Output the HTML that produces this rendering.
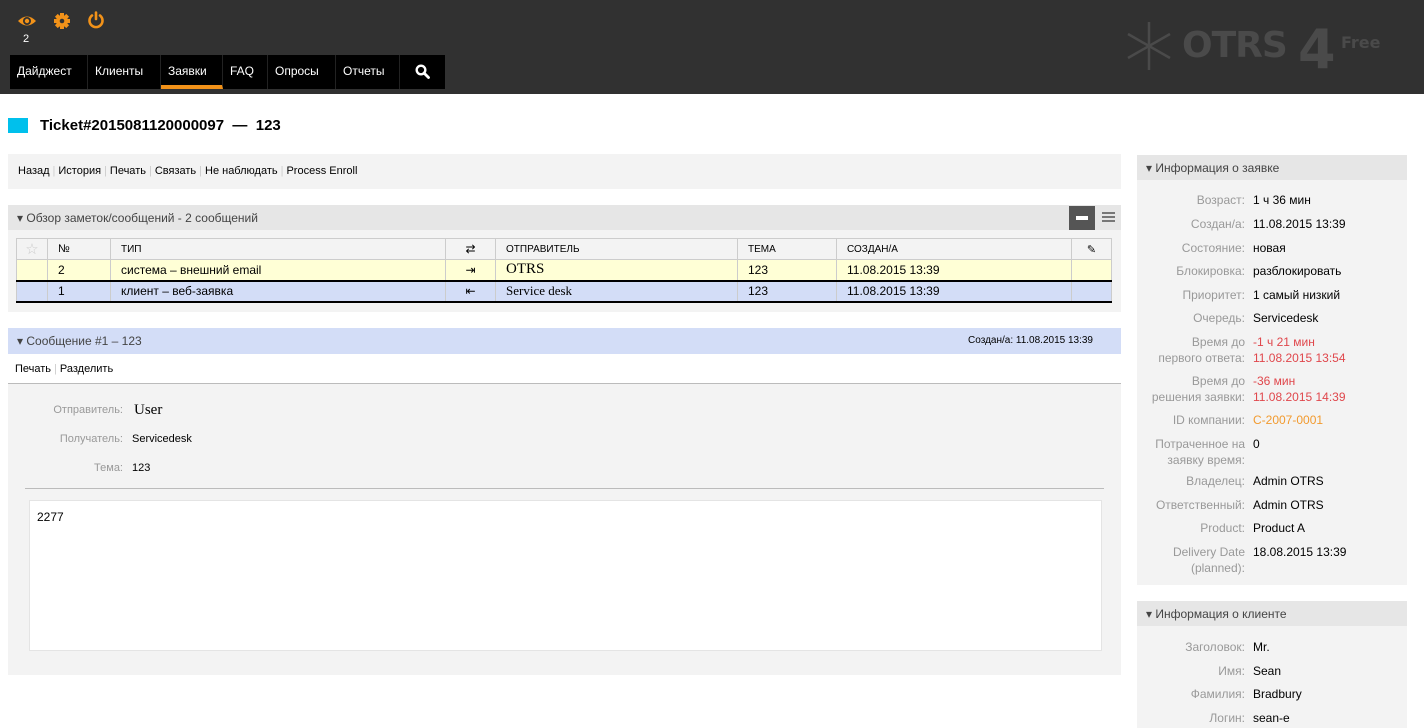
<!DOCTYPE html>
<html><head><meta charset="utf-8"><style>
*{margin:0;padding:0;box-sizing:border-box}
body{width:1424px;height:728px;overflow:hidden;background:#fff;font-family:"Liberation Sans",Arial,sans-serif;font-size:12px;color:#000;position:relative}
.a{position:absolute}
#hd{left:0;top:0;width:1424px;height:94px;background:#313131}
.nav{left:10px;top:55px;height:34px;background:#000;width:435px}
.nav div{position:absolute;top:0;height:34px;line-height:33px;color:#fff;font-size:12px;padding-left:7px;border-right:1px solid #222}
.lbl{color:#999;text-align:right;width:108px;left:1137px;line-height:16px}
.val{left:1253px;line-height:16px}
.red{color:#e0474c}
table{border-collapse:collapse}
td{border:1px solid #ccc;padding:0 0 0 10px;height:21px;font-size:12px}
.sep{color:#ccc;padding:0 3px}
</style></head><body>
<div id="hd" class="a"></div>
<svg class="a" style="left:17px;top:13px" width="20" height="16" viewBox="0 0 20 16"><path d="M1 8 Q10 -1 19 8 Q10 17 1 8Z" fill="#f29219"/><circle cx="10" cy="8" r="4" fill="#313131"/><circle cx="10" cy="8" r="2.2" fill="#f29219"/></svg>
<div class="a" style="left:23px;top:33px;color:#fff;font-size:11px">2</div>
<svg class="a" style="left:53px;top:12px" width="18" height="18" viewBox="0 0 18 18"><g fill="#f29219"><circle cx="9" cy="9" r="6"/><rect x="7" y="1" width="4" height="16"/><rect x="1" y="7" width="16" height="4"/><rect x="7" y="1" width="4" height="16" transform="rotate(45 9 9)"/><rect x="7" y="1" width="4" height="16" transform="rotate(-45 9 9)"/></g><circle cx="9" cy="9" r="2.3" fill="#313131"/></svg>
<svg class="a" style="left:87px;top:11px" width="18" height="18" viewBox="0 0 18 18"><path d="M5 4.5 A6.5 6.5 0 1 0 13 4.5" fill="none" stroke="#f29219" stroke-width="2.6" stroke-linecap="round"/><line x1="9" y1="1.5" x2="9" y2="8" stroke="#f29219" stroke-width="2.6" stroke-linecap="round"/></svg>
<div class="a nav">
<div style="left:0;width:78px">Дайджест</div>
<div style="left:78px;width:73px">Клиенты</div>
<div style="left:151px;width:62px;border-bottom:4px solid #f29219">Заявки</div>
<div style="left:213px;width:45px">FAQ</div>
<div style="left:258px;width:68px">Опросы</div>
<div style="left:326px;width:64px">Отчеты</div>
<div style="left:390px;width:45px;border:0"><svg style="position:absolute;left:15px;top:9px" width="15" height="15" viewBox="0 0 15 15"><circle cx="6" cy="6" r="4.3" fill="none" stroke="#fff" stroke-width="2.4"/><line x1="9" y1="9" x2="13.5" y2="13.5" stroke="#fff" stroke-width="2.8" stroke-linecap="round"/></svg></div>
</div>
<svg class="a" style="left:1124px;top:20px" width="50" height="52" viewBox="0 0 50 52"><g stroke="#4a4a4a" stroke-width="2.5" fill="none"><line x1="25" y1="2" x2="25" y2="50"/><line x1="4" y1="14" x2="46" y2="38"/><line x1="4" y1="38" x2="46" y2="14"/></g></svg>
<div class="a" style="left:1182px;top:25px;color:#4a4a4a;font-size:36px;font-weight:bold;font-family:'DejaVu Sans',sans-serif;letter-spacing:-1px">OTRS</div>
<div class="a" style="left:1298px;top:18px;color:#4a4a4a;font-size:54px;font-weight:bold;font-family:'DejaVu Sans',sans-serif">4</div>
<div class="a" style="left:1341px;top:33px;color:#4a4a4a;font-size:16px;font-weight:bold;font-family:'DejaVu Sans',sans-serif">Free</div>

<div class="a" style="left:8px;top:118px;width:20px;height:15px;background:#00c0ec"></div>
<div class="a" style="left:40px;top:117px;font-size:15px;font-weight:bold">Ticket#2015081120000097 &nbsp;— &nbsp;123</div>

<div class="a" style="left:8px;top:154px;width:1113px;height:35px;background:#f3f3f3;padding:11px 0 0 10px;font-size:11px">Назад<span class="sep">|</span>История<span class="sep">|</span>Печать<span class="sep">|</span>Связать<span class="sep">|</span>Не наблюдать<span class="sep">|</span>Process Enroll</div>

<div class="a" style="left:8px;top:205px;width:1113px;height:25px;background:#e6e6e6;color:#444;font-size:12px;line-height:27px;padding-left:9px">▾ Обзор заметок/сообщений - 2 сообщений</div>
<div class="a" style="left:1069px;top:206px;width:26px;height:24px;background:#555"><div style="position:absolute;left:7px;top:10px;width:12px;height:4px;background:#fff"></div></div>
<div class="a" style="left:1102px;top:212px;width:13px;height:2px;background:#777;box-shadow:0 4px 0 #777,0 8px 0 #777"></div>
<div class="a" style="left:8px;top:230px;width:1113px;height:82px;background:#f3f3f3"></div>
<table class="a" style="left:16px;top:238px;width:1096px">
<tr style="background:#f3f3f3;font-size:10px"><td style="width:31px;padding:0;text-align:center;color:#ccc;font-size:15px">☆</td><td style="width:63px;font-size:11px">№</td><td style="width:335px;font-size:10px">ТИП</td><td style="width:50px;text-align:center;padding:0;font-size:12px">⇄</td><td style="width:242px;font-size:10px">ОТПРАВИТЕЛЬ</td><td style="width:99px;font-size:10px">ТЕМА</td><td style="width:235px;font-size:10px">СОЗДАН/А</td><td style="padding:0;text-align:center;font-size:11px">✎</td></tr>
<tr style="background:#ffffd6;border-bottom:2px solid #000"><td></td><td>2</td><td>система – внешний email</td><td style="text-align:center;padding:0">⇥</td><td style="font-family:'Liberation Serif',serif;font-size:15px">OTRS</td><td>123</td><td>11.08.2015 13:39</td><td></td></tr>
<tr style="background:#d3ddf7;border-bottom:2px solid #000"><td></td><td>1</td><td>клиент – веб-заявка</td><td style="text-align:center;padding:0">⇤</td><td style="font-family:'Liberation Serif',serif;font-size:13px">Service desk</td><td>123</td><td>11.08.2015 13:39</td><td></td></tr>
</table>

<div class="a" style="left:8px;top:328px;width:1113px;height:26px;background:#d3ddf7;line-height:26px;padding-left:9px;color:#444;font-size:12px">▾ Сообщение #1 – 123<span style="position:absolute;right:28px;font-size:10px;color:#000">Создан/а: 11.08.2015 13:39</span></div>
<div class="a" style="left:15px;top:363px;font-size:11px">Печать<span class="sep">|</span>Разделить</div>
<div class="a" style="left:8px;top:383px;width:1113px;height:292px;background:#f3f3f3;border-top:1px solid #bbb"></div>
<div class="a" style="left:20px;top:404px;width:103px;text-align:right;color:#999;font-size:11px">Отправитель:</div>
<div class="a" style="left:134px;top:402px;font-family:'Liberation Serif',serif;font-size:15px">User</div>
<div class="a" style="left:20px;top:433px;width:103px;text-align:right;color:#999;font-size:11px">Получатель:</div>
<div class="a" style="left:132px;top:433px;font-size:11px">Servicedesk</div>
<div class="a" style="left:20px;top:462px;width:103px;text-align:right;color:#999;font-size:11px">Тема:</div>
<div class="a" style="left:132px;top:462px;font-size:11px">123</div>
<div class="a" style="left:25px;top:488px;width:1079px;height:1px;background:#bbb"></div>
<div class="a" style="left:29px;top:500px;width:1073px;height:151px;background:#fff;border:1px solid #e4e4e4;padding:9px 7px">2277</div>

<div class="a" style="left:1137px;top:155px;width:270px;height:25px;background:#e6e6e6;line-height:27px;padding-left:9px;color:#444;font-size:12px">▾ Информация о заявке</div>
<div class="a" style="left:1137px;top:180px;width:270px;height:405px;background:#f3f3f3"></div>
<div class="a lbl" style="top:192px">Возраст:</div><div class="a val" style="top:192px">1 ч 36 мин</div>
<div class="a lbl" style="top:216px">Создан/а:</div><div class="a val" style="top:216px">11.08.2015 13:39</div>
<div class="a lbl" style="top:240px">Состояние:</div><div class="a val" style="top:240px">новая</div>
<div class="a lbl" style="top:263px">Блокировка:</div><div class="a val" style="top:263px">разблокировать</div>
<div class="a lbl" style="top:287px">Приоритет:</div><div class="a val" style="top:287px">1 самый низкий</div>
<div class="a lbl" style="top:310px">Очередь:</div><div class="a val" style="top:310px">Servicedesk</div>
<div class="a lbl" style="top:334px">Время до<br>первого ответа:</div><div class="a val red" style="top:334px">-1 ч 21 мин<br>11.08.2015 13:54</div>
<div class="a lbl" style="top:373px">Время до<br>решения заявки:</div><div class="a val red" style="top:373px">-36 мин<br>11.08.2015 14:39</div>
<div class="a lbl" style="top:412px">ID компании:</div><div class="a val" style="top:412px;color:#f29a2e">C-2007-0001</div>
<div class="a lbl" style="top:436px">Потраченное на<br>заявку время:</div><div class="a val" style="top:436px">0</div>
<div class="a lbl" style="top:473px">Владелец:</div><div class="a val" style="top:473px">Admin OTRS</div>
<div class="a lbl" style="top:497px">Ответственный:</div><div class="a val" style="top:497px">Admin OTRS</div>
<div class="a lbl" style="top:520px">Product:</div><div class="a val" style="top:520px">Product A</div>
<div class="a lbl" style="top:544px">Delivery Date<br>(planned):</div><div class="a val" style="top:544px">18.08.2015 13:39</div>

<div class="a" style="left:1137px;top:601px;width:270px;height:25px;background:#e6e6e6;line-height:27px;padding-left:9px;color:#444;font-size:12px">▾ Информация о клиенте</div>
<div class="a" style="left:1137px;top:626px;width:270px;height:102px;background:#f3f3f3"></div>
<div class="a lbl" style="top:639px">Заголовок:</div><div class="a val" style="top:639px">Mr.</div>
<div class="a lbl" style="top:663px">Имя:</div><div class="a val" style="top:663px">Sean</div>
<div class="a lbl" style="top:686px">Фамилия:</div><div class="a val" style="top:686px">Bradbury</div>
<div class="a lbl" style="top:710px">Логин:</div><div class="a val" style="top:710px">sean-e</div>
</body></html>
